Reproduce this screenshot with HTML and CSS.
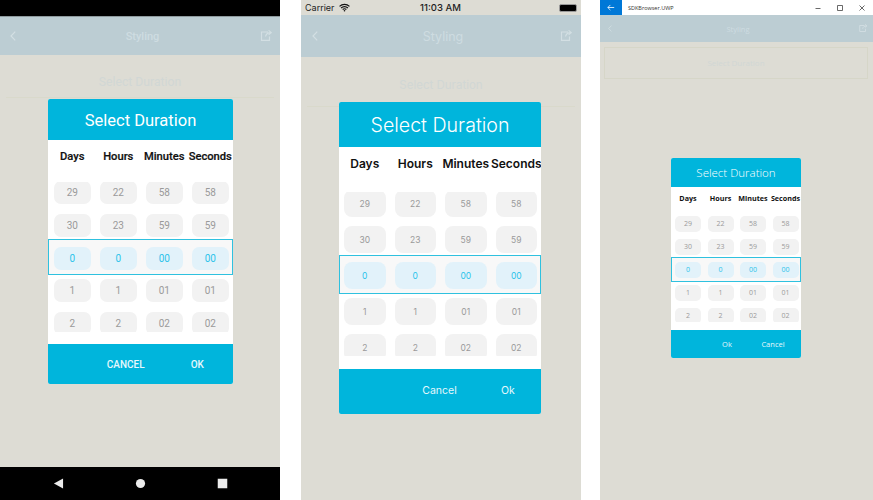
FILE: index.html
```html
<!DOCTYPE html>
<html>
<head>
	<meta charset="utf-8">
	<title>Select Duration</title>
	<link rel="stylesheet" href="styles.css">
</head>
<body>
<div class="screens">

	<!-- android -->
	<section class="phone android">
		<div class="topbar"></div>
		<header class="appbar">
			<svg class="back" viewBox="0 0 6 10"><path d="M5.2 .6 1 5l4.2 4.4"/></svg>
			<span class="title">Styling</span>
			<svg class="share" viewBox="0 0 12 11"><path d="M8 2H1.5v8.3h8V6.5M5.5 6.5C6 4 8 2.6 11 2.6M8.6 .4 11.3 2.6 8.6 4.9"/></svg>
		</header>
		<main class="content"><div class="trigger">Select Duration</div></main>
		<nav class="navbar">
			<svg class="nav-icon" viewBox="0 0 12 12"><path d="M11 .5v11L1 6z"/></svg>
			<svg class="nav-icon" viewBox="0 0 12 12"><circle cx="6" cy="6" r="5"/></svg>
			<svg class="nav-icon" viewBox="0 0 12 12"><path d="M.8 .8h10.4v10.4H.8z"/></svg>
		</nav>
		<div class="dialog">
			<div class="dialog-head">Select Duration</div>
			<div class="labels"><span>Days</span><span>Hours</span><span>Minutes</span><span>Seconds</span></div>
			<div class="wheel">
				<div class="cells">
					<span>29</span><span>22</span><span>58</span><span>58</span>
					<span>30</span><span>23</span><span>59</span><span>59</span>
					<span class="on">0</span><span class="on">0</span><span class="on">00</span><span class="on">00</span>
					<span>1</span><span>1</span><span>01</span><span>01</span>
					<span>2</span><span>2</span><span>02</span><span>02</span>
				</div>
			</div>
			<div class="band"></div>
			<div class="dialog-foot"><button>CANCEL</button><button>OK</button></div>
		</div>
	</section>

	<!-- ios -->
	<section class="phone ios">
		<div class="statusbar">
			<span class="carrier">Carrier
				<svg class="wifi" viewBox="0 0 12 9"><path d="M.6 3.2a7.7 7.7 0 0 1 10.8 0M2.3 5a5.2 5.2 0 0 1 7.4 0M4 6.7a2.8 2.8 0 0 1 4 0"/><circle cx="6" cy="8" r=".9"/></svg>
			</span>
			<span class="clock">11:03 AM</span>
			<span class="battery"></span>
		</div>
		<header class="appbar">
			<svg class="back" viewBox="0 0 6 10"><path d="M5.2 .6 1 5l4.2 4.4"/></svg>
			<span class="title">Styling</span>
			<svg class="share" viewBox="0 0 12 11"><path d="M8 2H1.5v8.3h8V6.5M5.5 6.5C6 4 8 2.6 11 2.6M8.6 .4 11.3 2.6 8.6 4.9"/></svg>
		</header>
		<main class="content"><div class="trigger">Select Duration</div></main>
		<div class="dialog">
			<div class="dialog-head">Select Duration</div>
			<div class="labels"><span>Days</span><span>Hours</span><span>Minutes</span><span>Seconds</span></div>
			<div class="wheel">
				<div class="cells">
					<span>29</span><span>22</span><span>58</span><span>58</span>
					<span>30</span><span>23</span><span>59</span><span>59</span>
					<span class="on">0</span><span class="on">0</span><span class="on">00</span><span class="on">00</span>
					<span>1</span><span>1</span><span>01</span><span>01</span>
					<span>2</span><span>2</span><span>02</span><span>02</span>
				</div>
			</div>
			<div class="band"></div>
			<div class="dialog-foot"><button>Cancel</button><button>Ok</button></div>
		</div>
	</section>

	<!-- uwp -->
	<section class="phone uwp">
		<div class="titlebar">
			<span class="win-back"><svg viewBox="0 0 10 8"><path d="M9 4H1M4.2 .8 1 4l3.2 3.2"/></svg></span>
			<span class="win-name">SDKBrowser.UWP</span>
			<span class="win-controls">
				<svg viewBox="0 0 22 10"><path d="M8.5 5.5h5"/></svg>
				<svg viewBox="0 0 22 10"><path d="M8.5 2.5h5v5h-5z"/></svg>
				<svg viewBox="0 0 22 10"><path d="m8.5 2.5 5 5M13.5 2.5l-5 5"/></svg>
			</span>
		</div>
		<header class="appbar">
			<svg class="back" viewBox="0 0 6 10"><path d="M5.2 .6 1 5l4.2 4.4"/></svg>
			<span class="title">Styling</span>
			<svg class="share" viewBox="0 0 12 11"><path d="M8 2H1.5v8.3h8V6.5M5.5 6.5C6 4 8 2.6 11 2.6M8.6 .4 11.3 2.6 8.6 4.9"/></svg>
		</header>
		<main class="content"><div class="trigger">Select Duration</div></main>
		<div class="dialog">
			<div class="dialog-head">Select Duration</div>
			<div class="labels"><span>Days</span><span>Hours</span><span>Minutes</span><span>Seconds</span></div>
			<div class="wheel">
				<div class="cells">
					<span>29</span><span>22</span><span>58</span><span>58</span>
					<span>30</span><span>23</span><span>59</span><span>59</span>
					<span class="on">0</span><span class="on">0</span><span class="on">00</span><span class="on">00</span>
					<span>1</span><span>1</span><span>01</span><span>01</span>
					<span>2</span><span>2</span><span>02</span><span>02</span>
				</div>
			</div>
			<div class="band"></div>
			<div class="dialog-foot"><button>Ok</button><button>Cancel</button></div>
		</div>
	</section>

</div>
</body>
</html>
```

FILE: styles.css
```css
html, body {
	margin: 0;
	height: 100%;
	background: #fff;
	overflow: hidden;
}

.screens {
	display: flex;
	height: 500px;
}

.phone {
	position: relative;
	display: flex;
	flex-direction: column;
	flex: none;
	height: 500px;
	background: #dddcd4;
	font-family: "Roboto", sans-serif;
}
.android { width: 280px; }
.ios { width: 280px; margin-left: 21px; font-family: "Inter", sans-serif; }
.uwp { width: 273px; margin-left: 19px; font-family: "Open Sans", sans-serif; }

/* bars above the app */
.topbar {
	height: 16px;
	background: #000;
	border-bottom: 1px solid #8f9a9e;
}
.statusbar {
	display: flex;
	justify-content: space-between;
	align-items: center;
	height: 15px;
	padding: 0 4px;
	font-size: 9px;
	color: #222;
}
.carrier { display: flex; align-items: center; gap: 4px; width: 60px; }
.wifi { width: 11px; height: 9px; fill: #111; }
.wifi path { fill: none; stroke: #111; stroke-width: 1.3; }
.clock { font-size: 9.5px; font-weight: 500; }
.battery {
	width: 16px;
	height: 6px;
	margin-left: 43px;
	background: #000;
	border: 1px solid #999;
	border-radius: 2px;
}
.titlebar {
	display: flex;
	align-items: center;
	height: 15px;
	background: #fff;
}
.win-back {
	display: flex;
	align-items: center;
	justify-content: center;
	width: 22px;
	height: 15px;
	background: #0078d7;
}
.win-back svg { width: 8px; height: 7px; fill: none; stroke: #fff; }
.win-name { margin-left: 6px; font-size: 5.5px; color: #333; flex: 1; }
.win-controls { display: flex; }
.win-controls svg { display: block; width: 22px; height: 10px; fill: none; stroke: #444; stroke-width: .8; }

/* app bar */
.appbar {
	display: flex;
	align-items: center;
	justify-content: space-between;
	background: #bccdd3;
	color: #cedce1;
}
.android .appbar { height: 38px; padding: 0 8px 0 10px; font-size: 11px; font-weight: 500; }
.ios .appbar { height: 42px; padding: 0 9px 0 11px; font-size: 12.5px; }
.uwp .appbar { height: 27px; padding: 0 5px 0 8px; font-size: 7.5px; }
.android .title { margin-left: 9px; }
.ios .title { margin-left: 8px; }
.uwp .title { margin-left: 6px; }
.appbar svg { flex: none; fill: none; stroke: #d3dfe3; stroke-width: 1.2; }
.back { width: 6px; height: 10px; }
.share { width: 12px; height: 11px; margin-top: -2px; }
.uwp .back { width: 4px; height: 7px; }
.uwp .share { width: 10px; height: 8px; }

/* page behind the dialog */
.content { flex: 1; }
.trigger {
	text-align: center;
	color: #d1d7d5;
	border-bottom: 1px solid #d9d9cb;
}
.android .trigger { margin: 16px 6px 0; font-size: 12.2px; line-height: 22px; height: 26px; }
.ios .trigger { margin: 17px 6px 0; font-size: 11.5px; line-height: 22px; height: 32px; }
.uwp .trigger {
	margin: 5px 5px 0 4px;
	height: 30px;
	line-height: 29px;
	font-size: 8px;
	border: 1px solid #d6d6c8;
}

.navbar {
	display: flex;
	justify-content: space-between;
	align-items: center;
	height: 33px;
	padding: 0 52px 0 53px;
	background: #000;
}
.nav-icon { width: 11px; height: 11px; fill: #ececec; }

/* dialog */
.dialog {
	position: absolute;
	display: flex;
	flex-direction: column;
	background: #fff;
	border-radius: 2px;
	overflow: hidden;
}
.dialog-head {
	display: flex;
	align-items: center;
	justify-content: center;
	box-sizing: border-box;
	background: #00b5dc;
	color: #fff;
}
.labels {
	display: grid;
	justify-items: center;
	align-items: center;
	font-weight: 700;
	color: #111;
	white-space: nowrap;
}
.wheel { position: relative; z-index: 1; overflow: hidden; }
.cells { display: grid; }
.cells span {
	display: flex;
	align-items: center;
	justify-content: center;
	background: #f2f2f2;
	color: #9a9a9a;
}
.cells .on { background: #e2f2fa; color: #2cc3ea; }
.band {
	position: absolute;
	left: 0;
	right: 0;
	box-sizing: border-box;
	border: 1px solid #2fc1df;
	background: #f8f8f8;
}
.dialog-foot {
	display: flex;
	justify-content: flex-end;
	margin-top: auto;
	background: #00b5dc;
}
.dialog-foot button {
	padding: 0;
	border: 0;
	background: none;
	color: #e6f8fc;
	font-family: inherit;
}

/* android sizes */
.android .dialog { left: 48px; top: 99px; width: 185px; height: 285px; }
.android .dialog-head { height: 41px; padding-top: 2px; font-size: 16.5px; }
.android .labels,
.android .cells { grid-template-columns: repeat(4, 36.5px); column-gap: 9.5px; padding-left: 6px; }
.android .labels { height: 42px; padding-bottom: 10px; box-sizing: border-box; font-size: 11.2px; font-weight: 500; -webkit-text-stroke: .2px #111; }
.android .wheel { height: 150px; }
.android .cells { margin-top: -1px; grid-auto-rows: 23px; row-gap: 9.8px; font-size: 10px; }
.android .cells span { border-radius: 7px; }
.android .band { top: 140px; height: 36px; }
.android .dialog-foot { height: 40px; }
.android .dialog-foot button { width: 71.5px; font-size: 10px; font-weight: 500; }

/* ios sizes */
.ios .dialog { left: 38px; top: 102px; width: 202px; height: 312px; }
.ios .dialog-head { height: 45px; font-size: 19.6px; font-weight: 300; }
.ios .labels,
.ios .cells { grid-template-columns: repeat(4, 41.5px); column-gap: 9px; padding-left: 5px; }
.ios .labels { height: 45px; padding-bottom: 12px; box-sizing: border-box; font-size: 12px; font-weight: 600; }
.ios .wheel { height: 164px; }
.ios .cells { margin-top: -2px; grid-auto-rows: 27px; row-gap: 9px; font-size: 8.5px; }
.ios .cells span { border-radius: 8px; }
.ios .band { top: 153px; height: 39px; }
.ios .dialog-foot { height: 45px; padding-bottom: 2px; box-sizing: border-box; }
.ios .dialog-foot button { width: 66px; font-size: 10.5px; }
.ios .dialog-foot button:first-child { width: 71px; }

/* uwp sizes */
.uwp .dialog { left: 71px; top: 158px; width: 130px; height: 200px; }
.uwp .dialog-head { height: 29px; font-size: 11.5px; font-weight: 300; }
.uwp .labels,
.uwp .cells { grid-template-columns: repeat(4, 26px); column-gap: 6.5px; padding-left: 4px; }
.uwp .labels { height: 29px; padding-bottom: 7px; box-sizing: border-box; font-size: 7.2px; }
.uwp .wheel { height: 106px; }
.uwp .cells { margin-top: -.5px; grid-auto-rows: 16.5px; row-gap: 6.5px; font-size: 7px; }
.uwp .cells span { border-radius: 5px; }
.uwp .band { top: 99px; height: 25px; }
.uwp .dialog-foot { height: 28px; padding-right: 5px; }
.uwp .dialog-foot button { width: 46px; font-size: 7.5px; }
```
